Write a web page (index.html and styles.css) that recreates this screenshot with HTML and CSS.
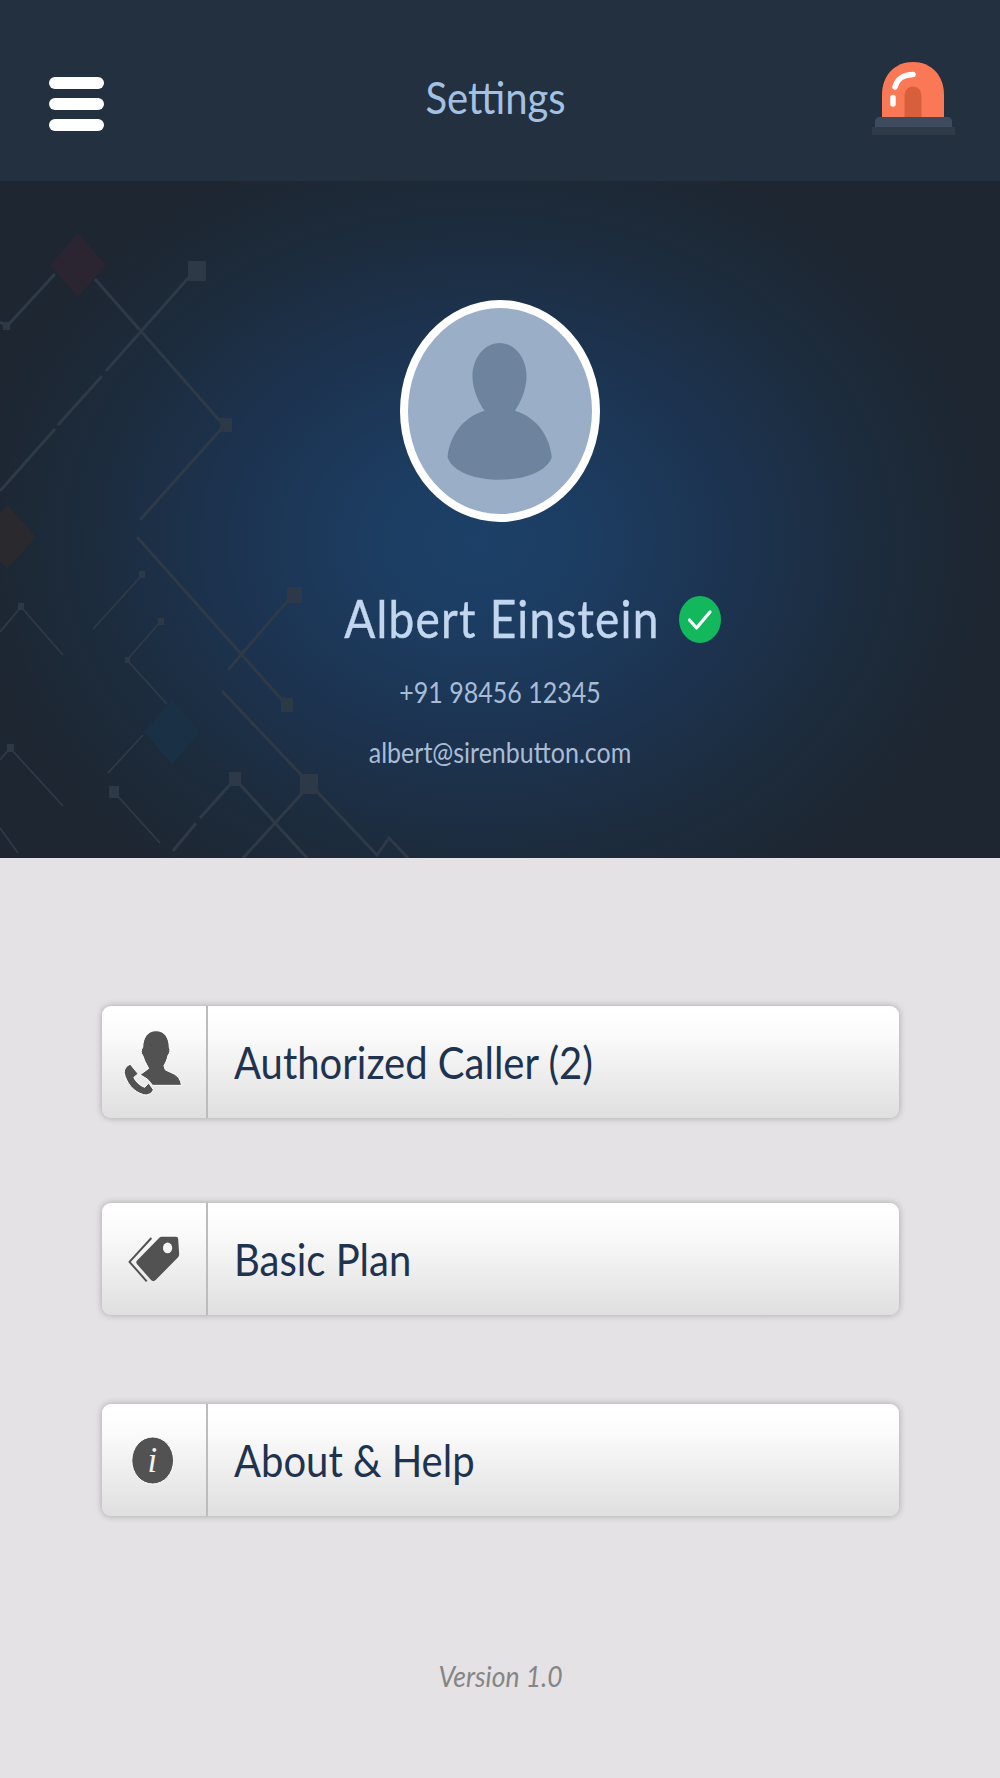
FILE: index.html
```html
<!DOCTYPE html>
<html lang="en">
<head>
<meta charset="utf-8">
<title>Settings</title>
<link rel="stylesheet" href="styles.css">
</head>
<body>
<div class="app">
  <header class="topbar">
    <button class="burger" aria-label="Menu"><span></span><span></span><span></span></button>
    <h1 class="title">Settings</h1>
    <svg class="siren" viewBox="872 62 83 73" aria-label="Siren">
      <path d="M882 117V95C882 75 895 62 913 62C931 62 944 75 944 95V117Z" fill="#fb7856"/>
      <path d="M904.500 117V97C904.500 90 908 86.500 913 86.500C918 86.500 921.500 90 921.500 97V117Z" fill="#d75f3c"/>
      <path d="M895 87C897 79 904 74.500 913 74.500" fill="none" stroke="#fff" stroke-width="5.500" stroke-linecap="round"/>
      <path d="M893 97.500V104" fill="none" stroke="#fff" stroke-width="5.500" stroke-linecap="round"/>
      <path d="M875 127V122C875 119 877 117 880 117H947C950 117 952 119 952 122V127Z" fill="#3e4b5f"/>
      <rect x="872" y="127" width="83" height="8" fill="#303b4a"/>
    </svg>
  </header>

  <section class="profile">
    <svg class="circuit" viewBox="0 181 1000 677" aria-hidden="true">
      <g class="tr">
        <path d="M55 274L7 326L0 322"/>
        <path d="M95 279L220 421"/>
        <path d="M190 276L106 371M102 376L58 425M55 429L0 491"/>
        <path d="M222 428L140 520"/>
        <path d="M137 537L283 701"/>
        <path d="M290 598L228 670"/>
        <path class="thin" d="M143 574L93 629"/>
        <path class="thin" d="M161 621L127 660L167 704"/>
        <path class="thin" d="M0 632L21 607L63 655"/>
        <path class="thin" d="M143 735L108 773"/>
        <path d="M222 691L377 855L389 838L408 858"/>
        <path d="M307 788L243 858"/>
        <path d="M235 779L200 818M196 823L173 851"/>
        <path d="M235 779L307 858"/>
        <path class="thin" d="M114 792L160 843"/>
        <path class="thin" d="M0 760L10 748L63 806"/>
        <path class="thin" d="M0 828L18 853"/>
      </g>
      <g class="sq">
        <rect x="188" y="261" width="18" height="20"/>
        <rect x="220" y="418" width="12" height="14"/>
        <rect x="287" y="587" width="15" height="16"/>
        <rect x="281" y="698" width="12" height="14"/>
        <rect x="300" y="774" width="18" height="20"/>
        <rect x="229" y="772" width="12" height="14"/>
        <rect x="109" y="786" width="10" height="12"/>
        <rect x="139" y="571" width="6" height="7"/>
        <rect x="158" y="618" width="6" height="7"/>
        <rect x="18" y="603" width="6" height="7"/>
        <rect x="7" y="744" width="7" height="8"/>
        <rect x="125" y="657" width="5" height="6"/>
        <rect x="3" y="322" width="7" height="8"/>
      </g>
      <path d="M78 233L106 265L78 297L50 265Z" fill="#2a2530"/>
      <path d="M7 505L36 537L7 569L-22 537Z" fill="#2a2a2e"/>
      <path d="M172 700L200 732L172 764L144 732Z" fill="#1a3044"/>
    </svg>

    <div class="avatar">
      <svg viewBox="238 86 546 613" aria-hidden="true">
        <path d="M510 190C555 190 590 235 590 290C590 330 570 372 555 392C620 410 660 470 665 530C650 575 580 597 510 597C440 597 370 575 355 530C360 470 400 410 465 392C450 372 429 330 429 290C429 235 465 190 510 190Z" fill="#6e849e"/>
      </svg>
    </div>

    <div class="name-wrap">
      <h2 class="name">Albert Einstein</h2>
      <svg class="verified" viewBox="0 0 42 47" aria-label="Verified">
        <ellipse cx="21" cy="23.500" rx="21" ry="23.500" fill="#13b85c"/>
        <path d="M10.500 24L17.500 32L31 16" fill="none" stroke="#fff" stroke-width="3.200" stroke-linecap="round" stroke-linejoin="round"/>
      </svg>
    </div>
    <p class="phone">+91 98456 12345</p>
    <p class="email">albert@sirenbutton.com</p>
  </section>

  <main class="menu">
    <a class="item item-caller">
      <span class="item-icon">
        <svg viewBox="35 48 314 337" aria-hidden="true">
          <path d="M198 122C225 122 238 145 238 172C242 180 240 190 234 197C232 210 226 220 222 228L226 240C240 250 270 250 275 287H188L172 268L150 255L176 236L165 215C162 208 160 200 158 197C152 190 152 180 158 172C158 145 172 122 198 122Z" fill="#525252" stroke="#fff" stroke-width="3"/>
          <path d="M120 223L144 252L131 263C136 276 150 288 164 293L176 280L190 300C186 312 172 318 160 315C130 306 108 280 102 248C102 236 110 228 120 223Z" fill="#525252" stroke="#fff" stroke-width="3" stroke-linejoin="round"/>
        </svg>
      </span>
      <span class="item-label">Authorized Caller (2)</span>
    </a>
    <a class="item item-plan">
      <span class="item-icon">
        <svg viewBox="35 38 314 337" aria-hidden="true">
          <path d="M184 143L118 215L170 274" fill="none" stroke="#525252" stroke-width="6" stroke-linejoin="round"/>
          <path d="M215 139H258Q265 139 265 146L268 192Q268 198 264 202L197 270Q190 277 183 270L141 222Q136 216 141 211L208 142Q211 139 215 139Z" fill="#525252"/>
          <ellipse cx="233" cy="173" rx="14" ry="16" fill="#f4f4f4"/>
        </svg>
      </span>
      <span class="item-label">Basic Plan</span>
    </a>
    <a class="item item-about">
      <span class="item-icon">
        <svg viewBox="35 42 314 337" aria-hidden="true">
          <ellipse cx="188" cy="212" rx="63" ry="71" fill="#525252" stroke="#fff" stroke-width="3"/>
          <text x="187" y="248" class="info-i">i</text>
        </svg>
      </span>
      <span class="item-label">About &amp; Help</span>
    </a>
    <p class="version">Version 1.0</p>
  </main>
</div>
</body>
</html>
```
FILE: styles.css
```css
* { box-sizing: border-box; }
html, body { margin: 0; padding: 0; }
body { font-family: "Lato", "Liberation Sans", sans-serif; background: #e4e2e4; }
h1, h2, p { margin: 0; font-weight: 400; }

.app { width: 1000px; height: 1778px; display: flex; flex-direction: column; overflow: hidden; }

.topbar {
  height: 181px; flex: none; background: #233040;
  display: flex; align-items: center; justify-content: space-between;
  padding: 25px 45px 0 49px;
}
.burger {
  width: 55px; height: 54px; padding: 0; margin-top: 2px; border: 0; background: none;
  display: flex; flex-direction: column; justify-content: space-between;
}
.burger span { display: block; height: 12px; background: #fff; border-radius: 6px; }
.title {
  font-size: 40px; line-height: 48px; color: #a3c1e2;
  transform: scaleY(1.1);
  margin: -12px 0 0 15px;
}
.siren { width: 83px; height: 73px; display: block; margin-top: -10px; }

.profile {
  position: relative; height: 677px; flex: none; overflow: hidden;
  display: flex; flex-direction: column; align-items: center;
  padding-top: 119px;
  background: radial-gradient(ellipse 510px 410px at 480px 360px, #1c4068 0%, #1c3d62 20%, #1c3350 50%, #1c2b3b 80%, #1e2632 100%);
}
.circuit { position: absolute; left: 0; top: 0; width: 1000px; height: 677px; }
.tr path { fill: none; stroke: #2e3a47; stroke-width: 3; }
.tr path.thin { stroke-width: 1.800; }
.sq rect { fill: #2d3947; }

.avatar {
  position: relative; width: 200px; height: 222px; border-radius: 50%;
  border: 8px solid #fff; background: #9aaec8; flex: none;
}
.avatar svg { display: block; width: 100%; height: 100%; }

.name-wrap { position: relative; margin: 70px 0 0 4px; height: 60px; }
.name {
  font-size: 46px; line-height: 60px; color: #c2d6ee; letter-spacing: 1.200px; white-space: nowrap;
  margin-top: -3px; -webkit-text-stroke: .4px #c2d6ee;
  transform: scaleY(1.12);
}
.verified { position: absolute; left: calc(100% + 19px); top: 4px; width: 42px; height: 47px; }
.phone {
  position: relative; margin-top: 22px; font-size: 25px; line-height: 36px; color: #a8bcd6;
  transform: scaleY(1.12);
}
.email {
  position: relative; margin-top: 24px; font-size: 25px; line-height: 36px; color: #a8bcd6;
  transform: scaleY(1.12);
}

.menu { flex: 1; display: flex; flex-direction: column; padding: 148px 101px 0 102px; }
.item {
  display: flex; height: 112px; flex: none; border-radius: 9px;
  background: linear-gradient(#ffffff 0%, #fbfbfb 25%, #dfdfdf 100%);
  box-shadow: 0 0 7px rgba(0,0,0,.28);
}
.item-plan { margin-top: 85px; }
.item-about { margin-top: 89px; }
.item-icon { width: 106px; flex: none; border-right: 2px solid #bcbcbc; }
.item-icon svg { display: block; width: 104px; height: 112px; }
.info-i { font-family: "Liberation Serif", serif; font-style: italic; font-size: 105px; fill: #f2f2f2; text-anchor: middle; }
.item-label {
  padding-left: 26px; font-size: 40px; line-height: 112px; color: #1e3350; white-space: nowrap;
  transform: scaleY(1.1); transform-origin: 0 50%;
}
.version {
  margin-top: 142px; text-align: center; font-size: 26.500px; line-height: 36px;
  font-style: italic; color: #858585; transform: scaleY(1.1);
}
```
